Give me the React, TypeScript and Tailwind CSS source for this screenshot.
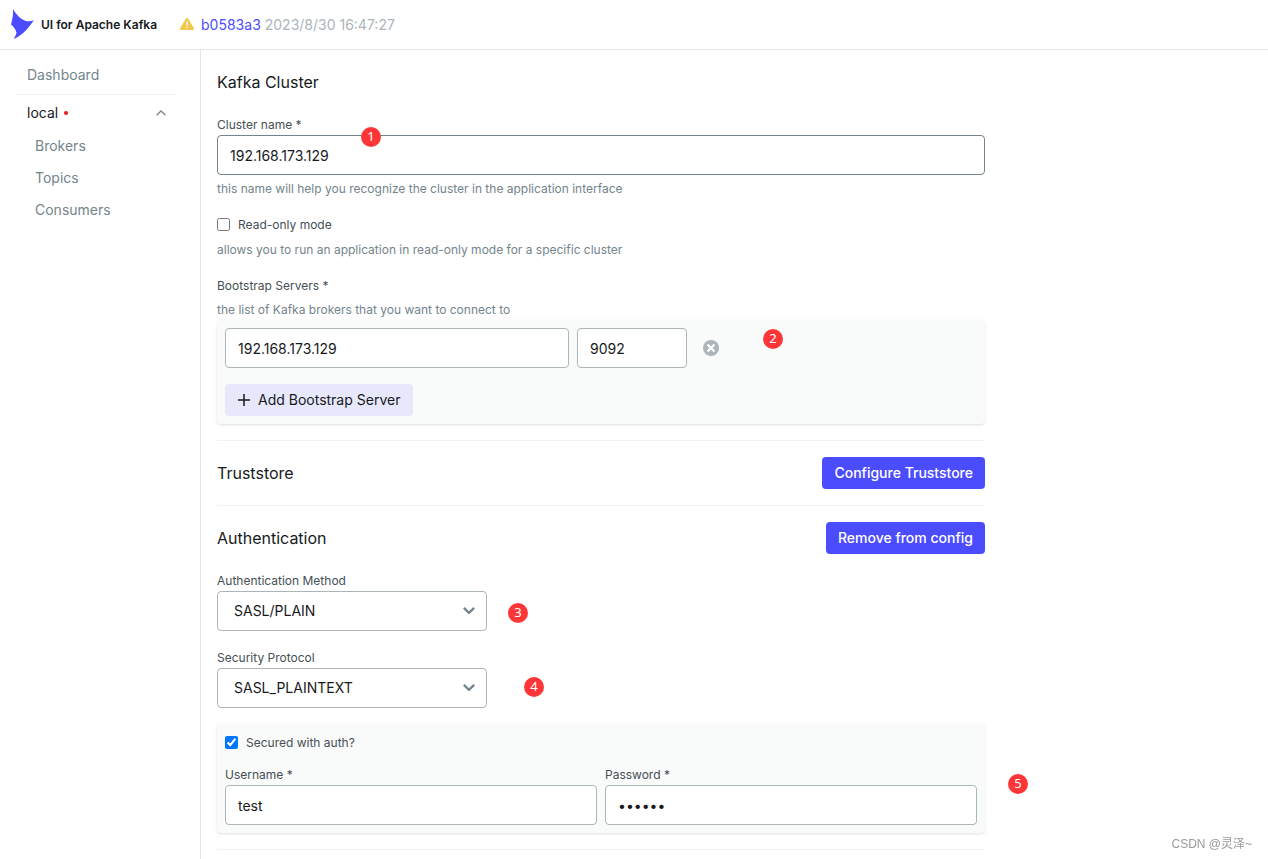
import React, { useState } from 'react';

const Logo = () => (
    <svg className="w-6 h-8 shrink-0" viewBox="0 1 24 32" fill="#4C4CFF" aria-hidden="true">
        <path d="M3 1C6.500 7 11 11.500 16 13C19 13.700 21.500 13 24 12.300C21.500 15.500 19.500 18.500 16.500 21.800C12.500 26 8 29.500 3.600 31C5.500 28 6.300 26.300 6.500 24.500C5.500 21 3.500 18.500 1 16.500C2.300 11.500 3.500 7 3 1Z" />
    </svg>
);

const WarningIcon = () => (
    <svg className="w-3.5 h-3 mb-0.5 shrink-0" viewBox="0 0 14 12" aria-hidden="true">
        <path d="M5.800.7a1.350 1.350 0 0 1 2.400 0l5.600 9.300a1.300 1.300 0 0 1-1.100 2H1.300a1.300 1.300 0 0 1-1.100-2Z" fill="#F2C94C" />
        <path d="M6.300 3.800h1.400v3.500H6.300ZM6.300 8.600h1.400v1.400H6.300Z" fill="#fff" />
    </svg>
);

const ChevronIcon: React.FC<{ className: string }> = ({ className }) => (
    <svg className={className} viewBox="0 0 10 6" fill="none" stroke="currentColor" aria-hidden="true">
        <path d="M.6.800 5 5 9.400.800" />
    </svg>
);

const RemoveIcon = () => (
    <svg className="w-4 h-4" viewBox="0 0 16 16" aria-hidden="true">
        <circle cx="8" cy="8" r="8" fill="#ABB5BA" />
        <path d="M4.500 4.500l7 7M11.500 4.500l-7 7" stroke="#fff" strokeWidth="2.400" />
    </svg>
);

const PlusIcon = () => (
    <svg className="w-3 h-3" viewBox="0 0 12 12" stroke="#171A1C" strokeWidth="1.500" aria-hidden="true">
        <path d="M6 0v12M0 6h12" />
    </svg>
);

const Marker: React.FC<{ n: number; className: string }> = ({ n, className }) => (
    <span className={`absolute w-5 h-5 rounded-full bg-[#fe3637] text-center text-white text-[13px] leading-[19px] font-['Noto_Sans',sans-serif] ${className}`}>
        {n}
    </span>
);

const inputClass = 'block h-10 px-3 bg-white border rounded text-sm text-[#171A1C] outline-none';
const labelClass = 'block text-xs leading-[21px] text-[#454F54]';
const primaryButton = 'h-8 px-3 rounded bg-[#4C4CFF] text-white text-sm font-medium';

const Hint: React.FC<{ children: React.ReactNode }> = ({ children }) => (
    <p className="mt-1 text-xs leading-[19px] text-[#73848C]">{children}</p>
);

const CheckField: React.FC<{ id: string; label: string; checked: boolean; onChange: (v: boolean) => void }> = ({ id, label, checked, onChange }) => (
    <div className="flex items-start gap-2 h-[22px]">
        <input id={id} type="checkbox" className="w-[13px] h-[13px] mt-1" checked={checked} onChange={(e) => onChange(e.target.checked)} />
        <label htmlFor={id} className={labelClass}>{label}</label>
    </div>
);

const SelectField: React.FC<{ id: string; label: string; options: string[]; children?: React.ReactNode }> = ({ id, label, options, children }) => (
    <div>
        <label htmlFor={id} className={labelClass}>{label}</label>
        <div className="relative w-[270px]">
            <select id={id} className="block w-full h-10 px-4 appearance-none bg-white border border-[#ABB5BA] rounded text-sm text-[#171A1C]">
                {options.map((o) => <option key={o}>{o}</option>)}
            </select>
            <ChevronIcon className="absolute right-3 top-4 w-3 h-[7px] text-[#73848C] stroke-2 pointer-events-none" />
            {children}
        </div>
    </div>
);

const Header = () => (
    <header className="flex items-center h-[50px] px-2.5 border-b border-[#E3E6E8]">
        <a href="#" className="flex items-center gap-[7px] text-xs font-semibold text-[#171A1C]">
            <Logo />
            UI for Apache Kafka
        </a>
        <div className="flex items-center gap-[7px] ml-[23px] text-sm text-[#ABB5BA]">
            <WarningIcon />
            <span><a href="#" className="text-[#4C4CFF]">b0583a3</a> 2023/8/30 16:47:27</span>
        </div>
    </header>
);

const Sidebar = () => {
    const [open, setOpen] = useState(true);
    return (
        <nav className="w-[201px] shrink-0 pt-1.5 pl-4 pr-6 border-r border-[#E3E6E8] text-sm text-[#73848C]">
            <a href="#" className="flex items-center h-[39px] pl-[11px] border-b border-[#F1F2F3]">Dashboard</a>
            <button type="button" className="flex items-center w-full h-[35px] pl-[11px] pr-2.5 text-[#171A1C]" onClick={() => setOpen(!open)}>
                local
                <span className="w-1 h-1 ml-1.5 rounded-full bg-[#E51A1A]" />
                <ChevronIcon className="w-2.5 h-1.5 ml-auto rotate-180 stroke-[1.3] text-[#73848C]" />
            </button>
            {open && (
                <ul>
                    {['Brokers', 'Topics', 'Consumers'].map((item) => (
                        <li key={item}><a href="#" className="flex items-center h-8 pl-[19px]">{item}</a></li>
                    ))}
                </ul>
            )}
        </nav>
    );
};

const App = () => {
    const [readOnly, setReadOnly] = useState(false);
    const [secured, setSecured] = useState(true);

    return (
        <div className="flex flex-col min-h-screen bg-white font-['Inter','Noto_Sans_CJK_SC',sans-serif]">
            <Header />
            <div className="flex grow">
                <Sidebar />
                <main className="grow p-4 pb-2">
                    <form className="flex flex-col gap-4 max-w-3xl" onSubmit={(e) => e.preventDefault()}>
                        <h1 className="text-base leading-8 text-[#171A1C]">Kafka Cluster</h1>
                        <div>
                            <label htmlFor="name" className={labelClass}>Cluster name *</label>
                            <div className="relative">
                                <input id="name" className={`${inputClass} w-full border-[#73848C]`} defaultValue="192.168.173.129" />
                                <Marker n={1} className="left-36 -top-2" />
                            </div>
                            <Hint>this name will help you recognize the cluster in the application interface</Hint>
                        </div>
                        <div>
                            <CheckField id="readonly" label="Read-only mode" checked={readOnly} onChange={setReadOnly} />
                            <Hint>allows you to run an application in read-only mode for a specific cluster</Hint>
                        </div>
                        <div>
                            <label htmlFor="host" className={labelClass}>Bootstrap Servers *</label>
                            <Hint>the list of Kafka brokers that you want to connect to</Hint>
                            <div className="relative flex flex-col items-start gap-4 mt-px p-2 rounded bg-[#F9FAFA] shadow-sm">
                                <div className="flex items-center gap-2">
                                    <input id="host" className={`${inputClass} w-[344px] border-[#ABB5BA]`} defaultValue="192.168.173.129" />
                                    <input aria-label="Port" className={`${inputClass} w-[110px] border-[#ABB5BA]`} defaultValue="9092" />
                                    <button type="button" aria-label="Remove server" className="ml-2"><RemoveIcon /></button>
                                </div>
                                <button type="button" className="flex items-center gap-2 h-8 px-[13px] rounded bg-[#E8E8FC] text-sm text-[#171A1C]">
                                    <PlusIcon />
                                    Add Bootstrap Server
                                </button>
                                <Marker n={2} className="left-[546px] top-[9px]" />
                            </div>
                        </div>
                        <hr className="border-[#F1F2F3]" />
                        <div className="flex items-center justify-between">
                            <h2 className="text-base text-[#171A1C]">Truststore</h2>
                            <button type="button" className={primaryButton}>Configure Truststore</button>
                        </div>
                        <hr className="border-[#F1F2F3]" />
                        <div className="flex items-center justify-between">
                            <h2 className="text-base text-[#171A1C]">Authentication</h2>
                            <button type="button" className={primaryButton}>Remove from config</button>
                        </div>
                        <SelectField id="method" label="Authentication Method" options={['SASL/PLAIN', 'SASL/GSSAPI', 'mTLS']}>
                            <Marker n={3} className="left-[291px] top-3" />
                        </SelectField>
                        <SelectField id="protocol" label="Security Protocol" options={['SASL_PLAINTEXT', 'SASL_SSL']}>
                            <Marker n={4} className="left-[307px] top-[9px]" />
                        </SelectField>
                        <div className="relative p-2 rounded bg-[#F9FAFA] shadow-sm">
                            <CheckField id="secured" label="Secured with auth?" checked={secured} onChange={setSecured} />
                            <div className="grid grid-cols-2 gap-2 mt-2.5">
                                <div>
                                    <label htmlFor="username" className={labelClass}>Username *</label>
                                    <input id="username" className={`${inputClass} w-full border-[#ABB5BA]`} defaultValue="test" />
                                </div>
                                <div>
                                    <label htmlFor="password" className={labelClass}>Password *</label>
                                    <input id="password" type="password" className={`${inputClass} w-full border-[#ABB5BA]`} defaultValue="secret" />
                                </div>
                            </div>
                            <Marker n={5} className="left-[791px] top-[50px]" />
                        </div>
                        <hr className="border-[#F1F2F3]" />
                    </form>
                </main>
            </div>
            <span className="fixed right-4 bottom-[7px] text-xs leading-4 text-[#999] font-['Liberation_Sans','Noto_Sans_CJK_SC',sans-serif]">CSDN @灵泽~</span>
        </div>
    );
};

export default App;
